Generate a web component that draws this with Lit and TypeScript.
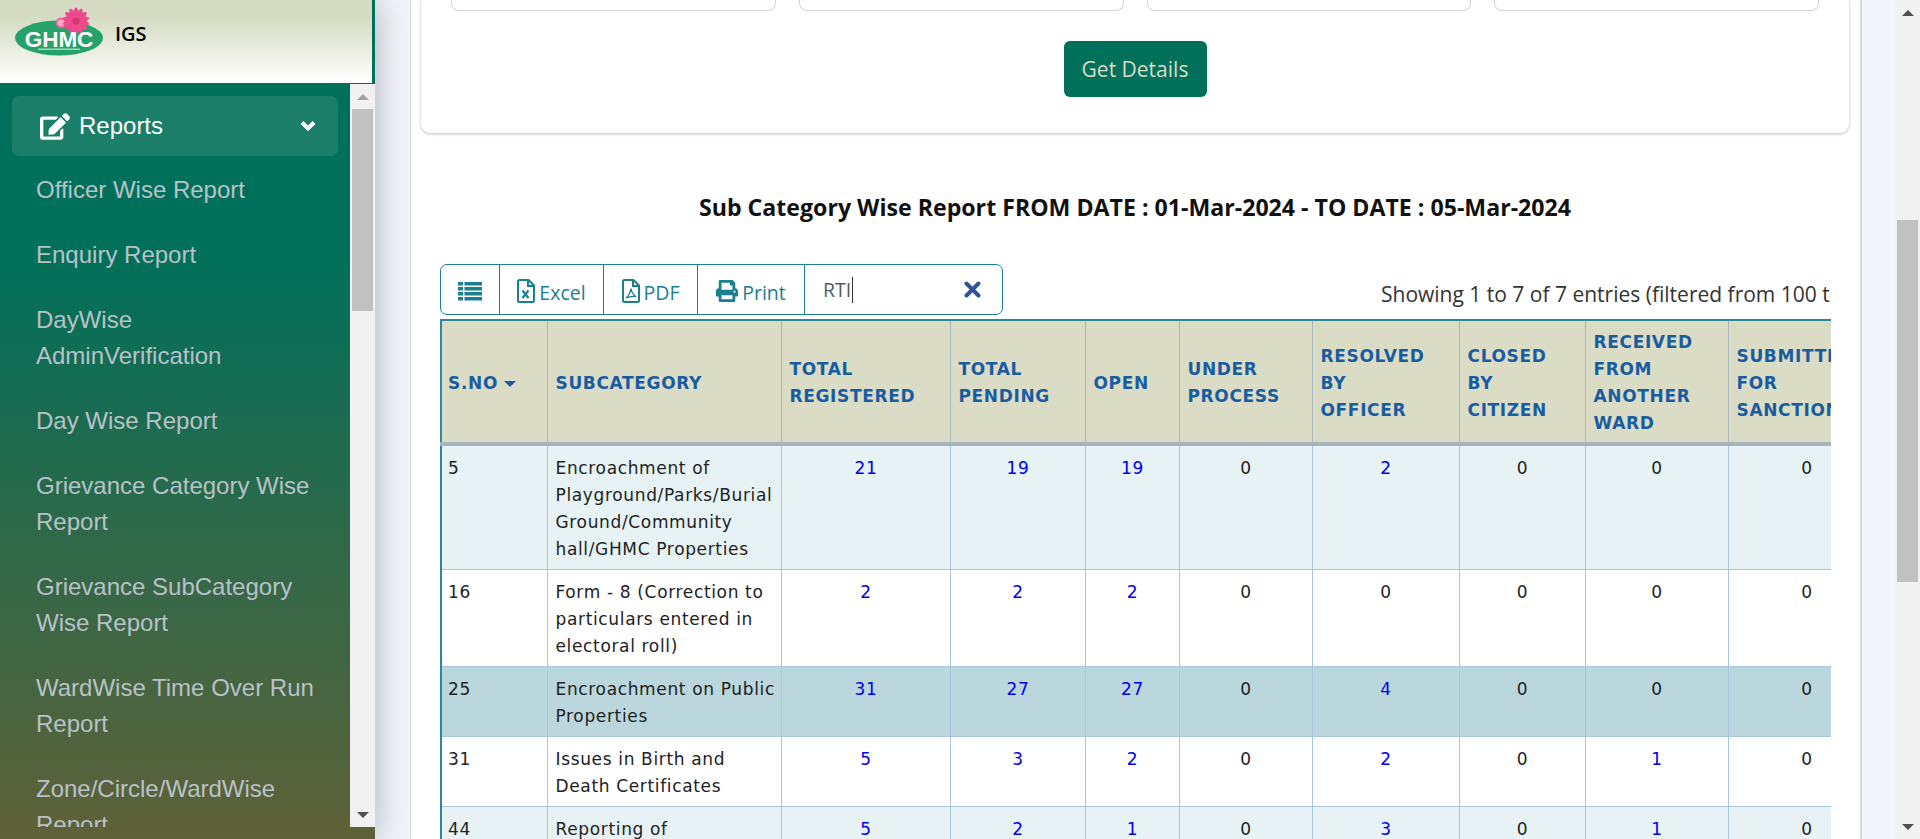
import { LitElement, html, css, svg } from "lit";
import { customElement } from "lit/decorators.js";

const MENU = [
    "Officer Wise Report",
    "Enquiry Report",
    "DayWise AdminVerification",
    "Day Wise Report",
    "Grievance Category Wise Report",
    "Grievance SubCategory Wise Report",
    "WardWise Time Over Run Report",
    "Zone/Circle/WardWise Report",
];

const COLS = [
    { label: "S.NO", w: 106 },
    { label: "SUBCATEGORY", w: 234 },
    { label: "TOTAL\nREGISTERED", w: 169 },
    { label: "TOTAL\nPENDING", w: 135 },
    { label: "OPEN", w: 94 },
    { label: "UNDER\nPROCESS", w: 133 },
    { label: "RESOLVED\nBY\nOFFICER", w: 147 },
    { label: "CLOSED\nBY\nCITIZEN", w: 126 },
    { label: "RECEIVED\nFROM\nANOTHER\nWARD", w: 143 },
    { label: "SUBMITTED\nFOR\nSANCTION", w: 157 },
];

const ROWS = [
    { id: "5", name: "Encroachment of\nPlayground/Parks/Burial\nGround/Community\nhall/GHMC Properties", vals: [21, 19, 19, 0, 2, 0, 0, 0], cls: "odd" },
    { id: "16", name: "Form - 8 (Correction to\nparticulars entered in\nelectoral roll)", vals: [2, 2, 2, 0, 0, 0, 0, 0], cls: "" },
    { id: "25", name: "Encroachment on Public\nProperties", vals: [31, 27, 27, 0, 4, 0, 0, 0], cls: "hot" },
    { id: "31", name: "Issues in Birth and\nDeath Certificates", vals: [5, 3, 2, 0, 2, 0, 1, 0], cls: "" },
    { id: "44", name: "Reporting of\nUnauthorized Constructions", vals: [5, 2, 1, 0, 3, 0, 1, 0], cls: "odd" },
];

const PETALS = Array.from({ length: 14 }, (_, i) => (i * 360) / 14);

const scrollbar = (thumbTop: number, thumbH: number, upDim = false) => html`
    <div class="vbar">
        <div class="arrow"><span class="up ${upDim ? "dim" : ""}"></span></div>
        <div class="thumb" style="margin-top:${thumbTop}px;height:${thumbH}px"></div>
        <div class="arrow end"><span class="down"></span></div>
    </div>
`;

@customElement("app-root")
class AppRoot extends LitElement {
    static styles = css`
        :host {
            display: flex;
            height: 100vh;
            overflow: hidden;
            font-family: "Open Sans", sans-serif;
            background: #f3f4f9;
        }
        .vbar {
            flex: none;
            width: 25px;
            background: #f1f1f1;
            display: flex;
            flex-direction: column;
            align-items: center;
        }
        .arrow {
            height: 25px;
            flex: none;
            display: flex;
            align-items: center;
            justify-content: center;
        }
        .arrow.end {
            margin-top: auto;
        }
        .up,
        .down {
            width: 0;
            height: 0;
            border-left: 6px solid transparent;
            border-right: 6px solid transparent;
        }
        .up {
            border-bottom: 6px solid #505050;
        }
        .up.dim {
            border-bottom-color: #a3a3a3;
        }
        .down {
            border-top: 6px solid #505050;
        }
        .thumb {
            width: 21px;
            background: #c1c1c1;
            flex: none;
        }

        /* sidebar */
        .side {
            flex: none;
            width: 375px;
            display: flex;
            flex-direction: column;
            background: linear-gradient(to bottom, #00705a 30%, #5f6138);
            box-shadow: 0 0 32px rgba(40, 50, 80, 0.35);
            position: relative;
            padding-bottom: 12px;
            box-sizing: border-box;
        }
        .brand {
            flex: none;
            height: 83px;
            box-sizing: border-box;
            border-right: 3px solid #00705a;
            background: linear-gradient(to bottom, #d6dcc4 22%, #ffffff 100%);
            display: flex;
            align-items: flex-start;
            padding-left: 15px;
            gap: 8px;
        }
        .brand svg {
            flex: none;
            margin-top: 5px;
        }
        .brand b {
            font-size: 20px;
            font-weight: 600;
            line-height: 24px;
            margin-top: 22px;
            color: #000;
        }
        .side-body {
            flex: 1;
            min-height: 0;
            display: flex;
            margin-top: 1px;
        }
        .menu {
            flex: 1;
            min-width: 0;
            overflow: hidden;
            padding: 12px 12px 0;
            font-family: "Liberation Sans", Arial, sans-serif;
        }
        .menu-head {
            height: 60px;
            border-radius: 7px;
            background: #1b7e69;
            color: #fff;
            font-size: 24px;
            display: flex;
            align-items: center;
            padding: 0 22px 0 28px;
            gap: 9px;
            margin-bottom: 2px;
        }
        .menu-head .chev {
            margin-left: auto;
        }
        .menu a {
            display: block;
            color: #b9c1c8;
            font-size: 24px;
            line-height: 36px;
            padding: 14px 24px 15px;
        }

        /* main */
        .main {
            flex: 1;
            min-width: 0;
            padding: 0 33px 0 35px;
        }
        .panel {
            height: 100%;
            box-sizing: border-box;
            background: #fff;
            border-left: 1px solid #dcdde3;
            border-right: 2px solid #d5d6db;
            overflow: hidden;
            padding: 0 11px 0 10px;
        }
        .card {
            height: 133px;
            box-sizing: border-box;
            border-radius: 0 0 9px 9px;
            box-shadow: 0 1px 3px rgba(60, 60, 70, 0.35);
            display: flex;
            flex-direction: column;
            align-items: center;
            padding: 0 30px;
        }
        .filters {
            align-self: stretch;
            display: grid;
            grid-template-columns: repeat(4, 1fr);
            gap: 23px;
        }
        .filters div {
            height: 11px;
            box-sizing: border-box;
            border: 1px solid #d2d3dc;
            border-top: none;
            border-radius: 0 0 8px 8px;
        }
        .go {
            margin-top: 30px;
            width: 143px;
            height: 56px;
            border-radius: 6px;
            background: #00705a;
            color: #dcdcc4;
            font-size: 21px;
            display: flex;
            align-items: center;
            justify-content: center;
        }
        h2 {
            margin: 59px 0 42px;
            font-size: 23.15px;
            font-weight: 700;
            line-height: 30px;
            color: #111;
            text-align: center;
        }
        .report {
            margin: 0 18px 0 19px;
            overflow: hidden;
        }
        .bar {
            display: flex;
            align-items: center;
            white-space: nowrap;
            margin-bottom: 4px;
        }
        .tools {
            flex: none;
            display: flex;
            height: 51px;
            width: 563px;
            box-sizing: border-box;
            border: 1.5px solid #1a7f8f;
            border-radius: 7px;
            color: #1a7f8f;
            font-size: 19.5px;
        }
        .tools > div {
            flex: none;
            display: flex;
            align-items: center;
            justify-content: center;
            gap: 4px;
            padding-top: 3px;
            border-right: 1.5px solid #1a7f8f;
            box-sizing: border-box;
        }
        .tools .lbl {
            padding-top: 2px;
        }
        .tools .t1 {
            width: 59px;
        }
        .tools .t2 {
            width: 104px;
        }
        .tools .t3 {
            width: 94px;
        }
        .tools .t4 {
            width: 107px;
        }
        .tools .search {
            flex: 1;
            gap: 0;
            border-right: none;
            padding: 0 21px 0 18px;
            justify-content: flex-start;
            color: #555c62;
        }
        .caret {
            width: 1px;
            height: 26px;
            background: #333;
            margin-left: 1px;
        }
        .search .x {
            margin-left: auto;
        }
        .info {
            flex: none;
            margin-left: 378px;
            font-size: 21px;
            color: #333;
            padding-top: 8px;
        }
        table {
            border-collapse: collapse;
            table-layout: fixed;
            font-family: "DejaVu Sans", Verdana, sans-serif;
            font-size: 17px;
            letter-spacing: 0.65px;
            line-height: 27px;
            border-top: 2px solid #2b8a9a;
            border-left: 2px solid #2b8a9a;
        }
        th,
        td {
            border: 1px solid #a9c6dc;
            padding: 9px 7px 6px 8px;
            white-space: pre;
            vertical-align: top;
        }
        th:first-child,
        td:first-child {
            padding-left: 6px;
        }
        thead th {
            background: #dbdcc5;
            color: #1a5ca0;
            font-weight: 700;
            text-align: left;
            vertical-align: middle;
            border-color: #a9b8bd;
            border-bottom: 4px solid #a4b6ba;
            padding-top: 8px;
            padding-bottom: 5px;
        }
        .sort {
            display: inline-block;
            width: 0;
            height: 0;
            margin-left: 6px;
            vertical-align: 2px;
            border-left: 6px solid transparent;
            border-right: 6px solid transparent;
            border-top: 6px solid #1a5ca0;
        }
        td {
            color: #222;
        }
        td.num {
            text-align: center;
        }
        td.link {
            color: #0000ee;
        }
        tr.odd td {
            background: #e6f2f4;
        }
        tr.hot td {
            background: #b9d7dd;
        }
    `;

    _logo() {
        return html`<svg width="92" height="60" viewBox="0 0 92 60">
            <ellipse cx="44" cy="33" rx="44" ry="17.5" fill="#25a269"></ellipse>
            <circle cx="46" cy="18" r="4.500" fill="#f7a9c6" stroke="#ee5c93" stroke-width="1.800"></circle>
            ${PETALS.map(
                (a) => svg`<ellipse cx="61" cy="16" rx="2.600" ry="6.500" fill="#ee4a8b"
                    transform="rotate(${a} 61 16) translate(0 -7)"></ellipse>`
            )}
            <circle cx="61" cy="16" r="3.500" fill="#d23a68"></circle>
            <text x="44" y="42" text-anchor="middle" font-family="Liberation Sans, Arial, sans-serif"
                font-weight="700" font-size="22.500" fill="#fff">GHMC</text>
            <rect x="23" y="43.500" width="42" height="1.500" fill="#9fd8ba"></rect>
        </svg>`;
    }

    _fileIcon(kind: string) {
        return html`<svg width="18" height="24" viewBox="0 0 18 24" fill="none" stroke="currentColor" stroke-width="2">
            <path d="M2.500 1h9l5.500 5.500V21.500a1.500 1.500 0 0 1-1.500 1.500h-13a1.500 1.500 0 0 1-1.500-1.500V2.500A1.500 1.500 0 0 1 2.500 1z"></path>
            <path d="M11 1v6h6"></path>
            ${kind == "x"
                ? svg`<path d="M5.500 11.500l6 7.500M11.500 11.500l-6 7.500" stroke-width="2.200"></path>`
                : svg`<path d="M9 9.500c-.5 3-2 7-5 9.500 3-1.500 6-2 10-1.500-2.500-1.500-4.500-5-5-8z" stroke-width="1.300"></path>`}
        </svg>`;
    }

    _toolbar() {
        return html`<div class="tools">
            <div class="t1">
                <svg width="24" height="19" viewBox="0 0 24 19" fill="currentColor">
                    ${[0, 5, 10, 15].map(
                        (y) => svg`<rect x="0" y=${y} width="5" height="3.500"></rect>
                            <rect x="6.500" y=${y} width="17.500" height="3.500"></rect>`
                    )}
                </svg>
            </div>
            <div class="t2">${this._fileIcon("x")}<span class="lbl">Excel</span></div>
            <div class="t3">${this._fileIcon("p")}<span class="lbl">PDF</span></div>
            <div class="t4">
                <svg width="22" height="22" viewBox="0 0 512 512" fill="currentColor">
                    <path d="M448 192V77.250c0-8.490-3.370-16.620-9.370-22.630L393.370 9.370c-6-6-14.140-9.370-22.630-9.370H96C78.330 0 64 14.330 64 32v160c-35.350 0-64 28.650-64 64v112c0 8.840 7.160 16 16 16h48v96c0 17.670 14.330 32 32 32h320c17.670 0 32-14.330 32-32v-96h48c8.840 0 16-7.160 16-16V256c0-35.350-28.650-64-64-64zm-64 256H128v-96h256v96zm0-224H128V64h192v48c0 8.840 7.160 16 16 16h48v96zm48 72c-13.250 0-24-10.750-24-24 0-13.260 10.750-24 24-24s24 10.740 24 24c0 13.250-10.750 24-24 24z"></path>
                </svg>
                <span class="lbl">Print</span>
            </div>
            <div class="search">
                <span>RTI</span><span class="caret"></span>
                <svg class="x" width="17" height="17" viewBox="0 0 17 17" stroke="#2f5597" stroke-width="4" stroke-linecap="round">
                    <path d="M2.500 2.500l12 12M14.500 2.500l-12 12"></path>
                </svg>
            </div>
        </div>`;
    }

    render() {
        return html`
            <aside class="side">
                <div class="brand">${this._logo()}<b>IGS</b></div>
                <div class="side-body">
                    <nav class="menu">
                        <div class="menu-head">
                            <svg width="30" height="27" viewBox="0 0 576 512" fill="#fff">
                                <path d="M402.600 83.200l90.200 90.200c3.800 3.800 3.800 10 0 13.800L274.400 405.600l-92.800 10.300c-12.400 1.400-22.900-9.100-21.500-21.500l10.300-92.800L388.800 83.200c3.800-3.800 10-3.800 13.800 0zm162-22.900l-48.800-48.800c-15.200-15.200-39.900-15.200-55.200 0l-35.400 35.400c-3.800 3.800-3.800 10 0 13.800l90.200 90.200c3.800 3.800 10 3.800 13.800 0l35.400-35.400c15.200-15.300 15.200-40 0-55.200zM384 346.200V448H64V128h229.800c3.200 0 6.200-1.300 8.500-3.500l40-40c7.600-7.600 2.200-20.500-8.500-20.500H48C21.500 64 0 85.500 0 112v352c0 26.500 21.500 48 48 48h352c26.500 0 48-21.500 48-48V306.200c0-10.700-12.900-16-20.500-8.500l-40 40c-2.200 2.300-3.500 5.300-3.500 8.500z"></path>
                            </svg>
                            <span>Reports</span>
                            <svg class="chev" width="16" height="12" viewBox="0 0 16 12" fill="none" stroke="#fff" stroke-width="4">
                                <path d="M2 2.500l6 6 6-6"></path>
                            </svg>
                        </div>
                        ${MENU.map((m) => html`<a>${m}</a>`)}
                    </nav>
                    ${scrollbar(0, 202, true)}
                </div>
            </aside>
            <div class="main">
                <div class="panel">
                    <section class="card">
                        <div class="filters"><div></div><div></div><div></div><div></div></div>
                        <div class="go">Get Details</div>
                    </section>
                    <h2>Sub Category Wise Report FROM DATE : 01-Mar-2024 - TO DATE : 05-Mar-2024</h2>
                    <div class="report">
                        <div class="bar">
                            ${this._toolbar()}
                            <div class="info">Showing 1 to 7 of 7 entries (filtered from 100 total entries)</div>
                        </div>
                        <table style="width:${COLS.reduce((n, c) => n + c.w, 0)}px">
                            <colgroup>${COLS.map((c) => html`<col style="width:${c.w}px" />`)}</colgroup>
                            <thead>
                                <tr>
                                    ${COLS.map(
                                        (c, i) => html`<th>${c.label}${i == 0 ? html`<span class="sort"></span>` : ""}</th>`
                                    )}
                                </tr>
                            </thead>
                            <tbody>
                                ${ROWS.map(
                                    (r) => html`<tr class=${r.cls}>
                                        <td>${r.id}</td>
                                        <td>${r.name}</td>
                                        ${r.vals.map(
                                            (v) => html`<td class="num ${v > 0 ? "link" : ""}">${v}</td>`
                                        )}
                                    </tr>`
                                )}
                            </tbody>
                        </table>
                    </div>
                </div>
            </div>
            ${scrollbar(195, 362)}
        `;
    }
}
